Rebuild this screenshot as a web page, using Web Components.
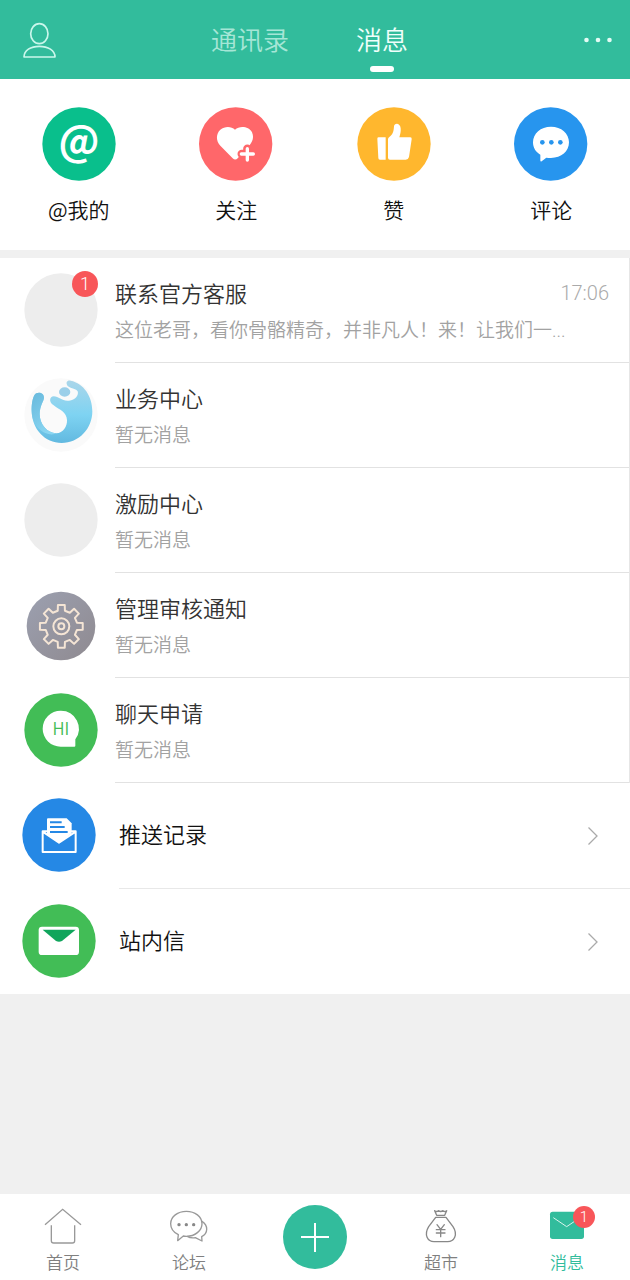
<!DOCTYPE html>
<html lang="zh-CN">
<head>
<meta charset="utf-8">
<meta name="viewport" content="width=device-width, initial-scale=1">
<title>消息</title>
<style>
html, body { margin: 0; }
body {
  background: #f0f0f0;
  color: #222;
  font-family: Roboto, "Noto Sans CJK SC", sans-serif;
  font-weight: 350;
}
</style>
</head>
<body>
<message-page></message-page>
<script>
const gearPath = (() => {
  const points = [];
  const cx = 185, cy = 169, outer = 65, inner = 48;
  for (let i = 0; i < 8; i++) {
    const a = i * 45;
    for (const [offset, r] of [[-13, inner], [-9, outer], [9, outer], [13, inner]]) {
      const t = (a + offset) * Math.PI / 180;
      points.push((cx + r * Math.sin(t)).toFixed(1) + ' ' + (cy - r * Math.cos(t)).toFixed(1));
    }
  }
  return 'M' + points.join('L') + 'Z';
})();

const icons = {
  person: ['66 63 108 108', `<g fill="none" stroke="#cbf7ec" stroke-width="5" stroke-linejoin="round"><ellipse cx="118" cy="98" rx="26" ry="30"/><path d="M72 168C72 148 92 136 118 136S165 148 165 168Z"/></g>`],
  more: ['0 0 28 8', `<g fill="#e4fbf5"><circle cx="2.500" cy="4" r="2.300"/><circle cx="14" cy="4" r="2.300"/><circle cx="25.500" cy="4" r="2.300"/></g>`],
  at: ['126 52 222 222', `<circle cx="237" cy="163" r="110" fill="#09bf8c"/><text x="237" y="199" text-anchor="middle" font-family="Noto Sans CJK SC, sans-serif" font-weight="bold" font-size="122" fill="#fff">@</text>`],
  heart: ['600 52 222 222', `<circle cx="710" cy="163" r="110" fill="#ff676a"/><path d="M708 120C722 107 750 110 759 128C768 148 756 164 742 178L716 206Q709 213 701 206L664 168C650 154 651 131 664 120C678 109 697 110 708 120Z" fill="#fff"/><path d="M745 177V209M728 193H762" stroke="#ff676a" stroke-width="25" stroke-linecap="round"/><path d="M745 177V211M727 193H763" stroke="#fff" stroke-width="10" stroke-linecap="round"/>`],
  like: ['126 52 222 222', `<circle cx="237" cy="163" r="110" fill="#ffb72e"/><path d="M191 143H212V210H195Q190 210 190 205L187 147Q187 143 191 143ZM219 149Q219 145 223 142C233 135 236 127 237 110C238 98 256 99 257 116C258 126 256 134 253 143H286Q291 143 290 149L282 202Q280 210 272 210H225Q219 210 219 204Z" fill="#fff"/>`],
  comment: ['600 52 222 222', `<circle cx="710" cy="163" r="110" fill="#2795ee"/><path d="M711 111C742 111 765 131 765 158S742 205 711 205C706 205 702 205 697 204L683 215Q679 217 679 212V195C665 187 657 174 657 158C657 131 680 111 711 111Z" fill="#fff"/><g fill="#2795ee"><circle cx="685" cy="158" r="7"/><circle cx="712" cy="158" r="7"/><circle cx="739" cy="158" r="7"/></g>`],
  blank: ['0 0 222 222', `<circle cx="111" cy="111" r="110" fill="#ededed"/>`],
  business: ['7 12 222 222', `<defs><linearGradient id="g" x1="0" y1="0" x2="0" y2="1"><stop offset="0" stop-color="#aad6ea"/><stop offset=".55" stop-color="#7ed3f2"/><stop offset="1" stop-color="#62b9e0"/></linearGradient><linearGradient id="h" x1="0" y1="0" x2=".6" y2="1"><stop offset="0" stop-color="#68b9dc"/><stop offset="1" stop-color="#8ad6f2"/></linearGradient></defs><circle cx="118" cy="123" r="110" fill="#fafafa"/><path d="M30 112C29 92 33 72 38 64C46 51 68 56 67 72C66 82 55 94 54 120C54 150 76 177 104 178C124 177 137 158 136 138C135 114 114 108 96 94C80 84 84 68 96 67C112 67 122 83 142 80C161 78 172 64 168 52C164 43 150 46 138 36C131 26 136 18 147 20C186 28 212 66 212 112C212 164 172 207 120 207C70 207 31 166 30 112Z" fill="url(#g)"/><path d="M30 112C29 92 33 72 38 64C46 51 68 56 67 72C66 82 55 94 54 120C54 150 76 177 104 178C84 190 32 170 30 112Z" fill="url(#h)"/><ellipse cx="129" cy="54" rx="17" ry="14" fill="#9bcfe9"/>`],
  gear: ['73 54 222 222', `<defs><linearGradient id="g" x1="0" y1="0" x2="1" y2="1"><stop offset="0" stop-color="#9ca0b0"/><stop offset="1" stop-color="#8f8a90"/></linearGradient></defs><circle cx="184" cy="168" r="103" fill="url(#g)"/><g fill="none" stroke="#f5e5d5" stroke-width="6" stroke-linejoin="round"><path d="${gearPath}"/><circle cx="185" cy="169" r="24"/><circle cx="185" cy="169" r="9"/></g>`],
  chat: ['73 369 222 222', `<circle cx="184" cy="480" r="110" fill="#42bd56"/><path d="M183 422A54 54 0 0 1 227 508V527Q227 530 224 530H183A54 54 0 0 1 183 422Z" fill="#fff"/><text x="184" y="495" text-anchor="middle" font-family="Noto Sans CJK SC, sans-serif" font-weight="350" font-size="50" fill="#42bd56">HI</text>`],
  push: ['66 54 222 222', `<circle cx="177" cy="165" r="110" fill="#2588e5"/><path d="M141 118Q141 115 144 115H200L215 130V160L177 189L141 162Z" fill="#fff"/><path d="M150 127H185M150 141H194M150 156H203" stroke="#2588e5" stroke-width="6"/><path d="M143 154H128V216H227V154H213M128 155L177 188L227 155" fill="none" stroke="#fff" stroke-width="6" stroke-linejoin="round"/>`],
  mail: ['66 372 222 222', `<circle cx="177" cy="483" r="110" fill="#42bd56"/><rect x="116" y="440" width="121" height="85" rx="10" fill="#fff"/><path d="M128 449H227L186 483Q177 488 168 483Z" fill="#10a55c"/>`],
  chevron: ['0 0 12 20', `<path d="M1.500 1.500L10 10L1.500 18.500" fill="none" stroke="#aaa" stroke-width="1.300"/>`],
  home: ['125 60 126 126', `<g fill="none" stroke="#999" stroke-width="4"><path d="M134 119L187 73L242 119"/><path d="M153 121V167Q153 174 160 174H216Q223 174 223 167V121"/></g>`],
  forum: ['504 60 126 126', `<g fill="none" stroke="#999" stroke-width="4" stroke-linejoin="round"><path d="M559 79C585 79 606 95 606 116S585 154 559 154C556 154 553 154 550 153L533 167L535 149C521 142 512 130 512 116C512 95 533 79 559 79Z"/><path d="M606 109C625 121 625 145 605 155L606 168L586 158C575 160 568 158 562 154"/></g><g fill="#888"><circle cx="537" cy="119" r="5"/><circle cx="559" cy="119" r="5"/><circle cx="581" cy="119" r="5"/></g>`],
  market: ['315 60 126 126', `<g fill="none" stroke="#888" stroke-width="4" stroke-linecap="round" stroke-linejoin="round"><path d="M359 77Q365 82 370 77Q377 82 384 77Q389 82 395 77L389 91H365ZM362 97H393L414 125C430 150 417 170 398 170H357C338 170 326 150 341 125Z"/><path d="M366 119L377 133L388 119M364 134H390M364 144H390M377 133V155"/></g>`],
  message: ['693 60 126 126', `<rect x="705" y="80" width="102" height="82" rx="8" fill="#32bc9c"/><path d="M715 98L755 125L795 98" fill="none" stroke="#d8f5ed" stroke-width="3"/>`],
  plus: ['0 0 64 64', `<circle cx="32" cy="32" r="32" fill="#32bc9c"/><path d="M32 18V47M18 32H46" stroke="#fff" stroke-width="2"/>`]
};

class Base extends HTMLElement {
  constructor() { super(); this.attachShadow({ mode: 'open' }); }
  connectedCallback() { this.shadowRoot.innerHTML = this.render(); }
}

customElements.define('app-icon', class extends Base {
  render() {
    const [box, body] = icons[this.getAttribute('name')];
    return `<style>:host{display:block;flex:none}svg{display:block;width:100%;height:100%}</style>
      <svg viewBox="${box}" aria-hidden="true">${body}</svg>`;
  }
});

customElements.define('count-badge', class extends Base {
  render() {
    return `<style>:host{display:block;box-sizing:border-box;width:26px;height:26px;line-height:26px;border-radius:50%;background:#f85659;color:#fff;font-size:18px;text-align:center}
      :host([small]){width:22px;height:22px;line-height:22px;font-size:15px}</style><slot></slot>`;
  }
});

customElements.define('top-bar', class extends Base {
  render() {
    return `<style>
      :host{display:flex;justify-content:space-between;align-items:center;background:#32bc9c;padding:0 18px 0 22px}
      button{border:0;background:none;padding:0;margin:0;font:inherit;color:inherit;cursor:pointer}
      .person{width:36px;height:36px} .person app-icon{height:36px}
      .more{width:51px;display:flex;justify-content:flex-end}
      .more app-icon{width:28px;height:8px}
      nav{display:flex;gap:67px;font-size:26px;line-height:32px}
      a{display:block;padding:25px 0 7px;color:#a5e6d6;text-decoration:none}
      a::after{content:"";display:block;width:24px;height:6px;margin:9px auto 0;border-radius:3px}
      a[aria-current]{color:#f0fffb} a[aria-current]::after{background:#fff}
      </style>
      <button class="person" aria-label="个人"><app-icon name="person"></app-icon></button>
      <nav><a href="#contacts">通讯录</a><a href="#messages" aria-current="page">消息</a></nav>
      <button class="more" aria-label="更多"><app-icon name="more"></app-icon></button>`;
  }
});

customElements.define('quick-link', class extends Base {
  render() {
    return `<style>:host{display:block}
      a{display:flex;flex-direction:column;align-items:center;gap:12px;color:#111;text-decoration:none;font-family:"Noto Sans CJK SC",sans-serif;font-size:21px;line-height:32px}
      app-icon{width:74px;height:74px}</style>
      <a href="#"><app-icon name="${this.getAttribute('icon')}"></app-icon><span><slot></slot></span></a>`;
  }
});

customElements.define('chat-row', class extends Base {
  render() {
    const badge = this.getAttribute('badge');
    return `<style>:host{display:block}
      a{display:flex;gap:17px;padding-left:24px;color:#333;text-decoration:none}
      .avatar{position:relative;margin-top:15px;width:74px;height:74px}
      .avatar app-icon{height:74px}
      count-badge{position:absolute;top:-2px;right:0}
      .body{flex:1;min-width:0;border-bottom:1px solid #e2e2e2;padding:21px 20px 15px 0}
      .head{display:flex;justify-content:space-between;font-size:22px;line-height:32px}
      time{font-size:20px;line-height:28px;color:#aaa}
      .preview{margin-top:4px;font-size:19px;line-height:32px;color:#a2a2a2;white-space:nowrap;overflow:hidden;text-overflow:ellipsis}
      </style>
      <a href="#"><div class="avatar"><app-icon name="${this.getAttribute('icon')}"></app-icon>${badge ? `<count-badge>${badge}</count-badge>` : ''}</div>
      <div class="body"><div class="head"><span>${this.getAttribute('heading')}</span><time>${this.getAttribute('time') || ''}</time></div>
      <div class="preview"><slot></slot></div></div></a>`;
  }
});

customElements.define('link-row', class extends Base {
  render() {
    return `<style>:host{display:block}
      a{display:flex;gap:23px;padding-left:22px;color:#111;text-decoration:none}
      .avatar{width:74px;height:74px;margin-top:15px}
      .body{flex:1;display:flex;align-items:center;justify-content:space-between;padding:37px 31px 36px 0;font-size:22px;line-height:32px;border-bottom:1px solid #e8e8e8}
      :host(:last-of-type) .body{border-bottom:0}
      .chevron{width:12px;height:20px}</style>
      <a href="#"><app-icon class="avatar" name="${this.getAttribute('icon')}"></app-icon>
      <div class="body"><span><slot></slot></span><app-icon class="chevron" name="chevron"></app-icon></div></a>`;
  }
});

customElements.define('nav-item', class extends Base {
  render() {
    const badge = this.getAttribute('badge');
    return `<style>:host{display:block;color:#808080} :host([active]){color:#32bc9c}
      a{position:relative;display:flex;flex-direction:column;align-items:center;gap:4px;color:inherit;text-decoration:none;font-size:17px;line-height:24px}
      app-icon{width:42px;height:42px}
      count-badge{position:absolute;top:1px;left:50%;margin-left:6px}</style>
      <a href="#"><app-icon name="${this.getAttribute('icon')}"></app-icon><span><slot></slot></span>${badge ? `<count-badge small>${badge}</count-badge>` : ''}</a>`;
  }
});

customElements.define('bottom-nav', class extends Base {
  render() {
    return `<style>:host{display:grid;grid-template-columns:repeat(5,1fr);background:#fff;padding:11px 0 5px}
      button{justify-self:center;align-self:start;width:64px;height:64px;padding:0;border:0;background:none;cursor:pointer}
      button app-icon{height:64px}</style>
      <nav-item icon="home">首页</nav-item><nav-item icon="forum">论坛</nav-item>
      <button aria-label="发布"><app-icon name="plus"></app-icon></button>
      <nav-item icon="market">超市</nav-item><nav-item icon="message" badge="1" active>消息</nav-item>`;
  }
});

customElements.define('message-page', class extends Base {
  render() {
    return `<style>:host{display:flex;flex-direction:column;min-height:100vh}
      .quick{display:grid;grid-template-columns:repeat(4,1fr);background:#fff;padding:28px 0 25px;border-bottom:8px solid #f0f0f0}
      .chats{background:#fff;border-right:1px solid #e6e6e6}
      .links{background:#fff}
      main{flex:1}
      bottom-nav{position:sticky;bottom:0}</style>
      <top-bar></top-bar>
      <main>
        <section class="quick">
          <quick-link icon="at">@我的</quick-link><quick-link icon="heart">关注</quick-link>
          <quick-link icon="like">赞</quick-link><quick-link icon="comment">评论</quick-link>
        </section>
        <section class="chats">
          <chat-row icon="blank" badge="1" heading="联系官方客服" time="17:06">这位老哥，看你骨骼精奇，并非凡人！来！让我们一...</chat-row>
          <chat-row icon="business" heading="业务中心">暂无消息</chat-row>
          <chat-row icon="blank" heading="激励中心">暂无消息</chat-row>
          <chat-row icon="gear" heading="管理审核通知">暂无消息</chat-row>
          <chat-row icon="chat" heading="聊天申请">暂无消息</chat-row>
        </section>
        <section class="links">
          <link-row icon="push">推送记录</link-row>
          <link-row icon="mail">站内信</link-row>
        </section>
      </main>
      <bottom-nav></bottom-nav>`;
  }
});
</script>
</body>
</html>
